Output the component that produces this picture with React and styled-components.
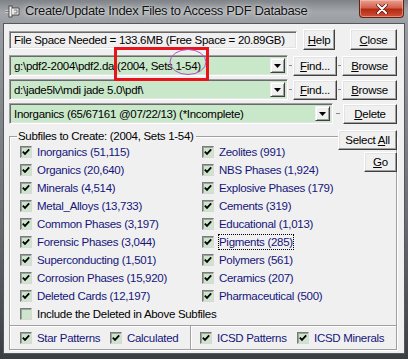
import React from "react";
import styled, { createGlobalStyle } from "styled-components";

const leftItems = [
  "Inorganics (51,115)",
  "Organics (20,640)",
  "Minerals (4,514)",
  "Metal_Alloys (13,733)",
  "Common Phases (3,197)",
  "Forensic Phases (3,044)",
  "Superconducting (1,501)",
  "Corrosion Phases (15,920)",
  "Deleted Cards (12,197)",
];

const rightItems = [
  "Zeolites (991)",
  "NBS Phases (1,924)",
  "Explosive Phases (179)",
  "Cements (319)",
  "Educational (1,013)",
  "Pigments (285)",
  "Polymers (561)",
  "Ceramics (207)",
  "Pharmaceutical (500)",
];

const GlobalStyle = createGlobalStyle`
  html, body {
    margin: 0;
    padding: 0;
    width: 408px;
    height: 359px;
    overflow: hidden;
    background: #3c3f42;
  }
  body {
    font-family: "Liberation Sans", Arial, sans-serif;
    font-size: 11.5px;
    letter-spacing: -0.3px;
  }
`;

const Check = ({ checked }) => (
  <Box>
    {checked && (
      <svg width="8" height="8" viewBox="0 0 8 8">
        <path d="M0.8 3.6 L3 5.9 L7.2 1.4" fill="none" stroke="#000" strokeWidth="1.8" />
      </svg>
    )}
  </Box>
);

const CheckItem = ({ label, checked = true, dark, focus, width }) => (
  <Item $w={width}>
    <Check checked={checked} />
    <ItemText $dark={dark} $focus={focus}>
      {label}
    </ItemText>
  </Item>
);

const Combo = ({ width, children }) => (
  <ComboBox $w={width}>
    <ComboText>{children}</ComboText>
    <DropBtn>
      <svg width="7" height="4" viewBox="0 0 7 4">
        <path d="M0 0 H7 L3.5 4 Z" fill="#000" />
      </svg>
    </DropBtn>
  </ComboBox>
);

const App = () => {
  return (
    <>
      <GlobalStyle />
      <Window>
        <TitleBar>
          <AppIcon width="16" height="13" viewBox="0 0 16 13">
            <path d="M0 6.5 H4" stroke="#f4f4f4" strokeWidth="2" />
            <path d="M0 6.5 H4" stroke="#333" strokeWidth="0.6" />
            <rect x="4" y="1" width="3" height="11" fill="#f4f4f4" stroke="#333" strokeWidth="0.8" />
            <path d="M7 3 H14 V10 H7" fill="#e8e8e8" stroke="#333" strokeWidth="0.8" />
            <path d="M9 5 H12 V8 H9" fill="none" stroke="#555" strokeWidth="0.7" />
          </AppIcon>
          <Title>Create/Update Index Files to Access PDF Database</Title>
          <CloseBox>
            <svg width="12" height="10" viewBox="0 0 12 10">
              <path d="M2 1 L10 9 M10 1 L2 9" stroke="#5a1010" strokeWidth="3.4" strokeLinecap="round" />
              <path d="M2 1 L10 9 M10 1 L2 9" stroke="#fff" strokeWidth="2" strokeLinecap="round" />
            </svg>
          </CloseBox>
        </TitleBar>

        <Body>
          <Row $h={21}>
            <Field $w={288}>File Space Needed = 133.6MB (Free Space = 20.89GB)</Field>
            <Button $w={32} $h={21} $ml={6}>
              <u>H</u>elp
            </Button>
            <Button $w={47} $h={21} $ml={15}>
              <u>C</u>lose
            </Button>
          </Row>

          <Row $h={21} $mt={5}>
            <Combo width={279}>g:\pdf2-2004\pdf2.da (2004, Sets 1-54)</Combo>
            <Dash />
            <Button $w={44}>
              <u>F</u>ind...
            </Button>
            <Dash />
            <Button $w={55}>
              <u>B</u>rowse
            </Button>
          </Row>

          <Row $h={21} $mt={3}>
            <Combo width={279}>d:\jade5lv\mdi jade 5.0\pdf\</Combo>
            <Dash />
            <Button $w={44}>
              <u>F</u>ind...
            </Button>
            <Dash />
            <Button $w={55}>
              <u>B</u>rowse
            </Button>
          </Row>

          <Row $h={21} $mt={3}>
            <Combo width={324}>Inorganics (65/67161 @07/22/13) (*Incomplete)</Combo>
            <Dash $wide />
            <Button $w={54}>
              <u>D</u>elete
            </Button>
          </Row>

          <GroupBox>
            <Legend>Subfiles to Create: (2004, Sets 1-54)</Legend>
            <SideButtons>
              <Button $w={59}>
                Select <u>A</u>ll
              </Button>
              <Button $w={33} $mt={2}>
                <u>G</u>o
              </Button>
            </SideButtons>

            <Subfiles>
              <Columns>
                <Column>
                  {leftItems.map((label) => (
                    <CheckItem key={label} label={label} />
                  ))}
                </Column>
                <Column>
                  {rightItems.map((label) => (
                    <CheckItem key={label} label={label} focus={label.startsWith("Pigments")} />
                  ))}
                </Column>
              </Columns>
              <CheckItem label="Include the Deleted in Above Subfiles" checked={false} dark />
            </Subfiles>

            <Extras>
              <Half>
                <CheckItem label="Star Patterns" width={90} />
                <CheckItem label="Calculated" />
              </Half>
              <Half $divider>
                <CheckItem label="ICSD Patterns" width={97} />
                <CheckItem label="ICSD Minerals" />
              </Half>
            </Extras>
          </GroupBox>

          <Markup width="100" height="40" viewBox="0 0 100 40">
            <rect x="2.5" y="1.5" width="92" height="31" fill="none" stroke="#e8141c" strokeWidth="3" />
            <ellipse cx="75" cy="15" rx="18" ry="12.5" fill="none" stroke="#b54cc8" strokeWidth="1" />
          </Markup>
        </Body>
      </Window>
    </>
  );
};

const Window = styled.div`
  width: 408px;
  height: 359px;
  display: flex;
  flex-direction: column;
  background: linear-gradient(
    to bottom,
    #7f8387 0px,
    #a3a7ab 12px,
    #9a9ea2 23px,
    #6a6e72 60%,
    #3b3e41 100%
  );
`;

const TitleBar = styled.div`
  height: 23px;
  display: flex;
  align-items: flex-start;
  flex-shrink: 0;
`;

const AppIcon = styled.svg`
  margin: 5px 0 0 5px;
  flex-shrink: 0;
`;

const Title = styled.div`
  margin-left: 4px;
  line-height: 21px;
  font-size: 13px;
  letter-spacing: -0.35px;
  color: #111;
  white-space: nowrap;
  text-shadow: 0 0 6px rgba(255, 255, 255, 0.85), 0 0 2px rgba(255, 255, 255, 0.6);
`;

const CloseBox = styled.div`
  margin-left: auto;
  margin-right: 4px;
  width: 43px;
  height: 17px;
  display: flex;
  align-items: center;
  justify-content: center;
  border: 1px solid #5e2418;
  border-top: none;
  border-radius: 0 0 4px 4px;
  background: linear-gradient(to bottom, #e8a293 0%, #d4614c 45%, #b42a12 55%, #d0503a 100%);
  box-shadow: inset 0 0 0 1px rgba(255, 200, 190, 0.5);
`;

const Body = styled.div`
  position: relative;
  margin: 0 3px;
  height: 331px;
  box-sizing: border-box;
  background: #f0f0f0;
  border: 1px solid #54585c;
  padding: 5px 7px 0 5px;
  display: flex;
  flex-direction: column;
`;

const Row = styled.div`
  height: ${(p) => p.$h}px;
  margin-top: ${(p) => p.$mt || 0}px;
  display: flex;
  align-items: center;
  flex-shrink: 0;
`;

const sunken = `
  border: 1px solid;
  border-color: #a0a0a0 #ffffff #ffffff #a0a0a0;
  box-shadow: inset 1px 1px 0 #696969, inset -1px -1px 0 #e3e3e3;
`;

const Field = styled.div`
  width: ${(p) => p.$w}px;
  height: 18px;
  box-sizing: border-box;
  ${sunken}
  padding: 0 4px;
  line-height: 16px;
  color: #000;
  white-space: nowrap;
  overflow: hidden;
`;

const ComboBox = styled.div`
  width: ${(p) => p.$w}px;
  height: 21px;
  box-sizing: border-box;
  ${sunken}
  background: #c9e7c9;
  display: flex;
  align-items: center;
  padding: 0 2px 0 4px;
`;

const ComboText = styled.span`
  flex: 1;
  color: #000;
  white-space: nowrap;
  overflow: hidden;
`;

const DropBtn = styled.span`
  width: 15px;
  height: 15px;
  box-sizing: border-box;
  display: flex;
  align-items: center;
  justify-content: center;
  background: #f0f0f0;
  border: 1px solid;
  border-color: #f0f0f0 #404040 #404040 #f0f0f0;
  box-shadow: inset 1px 1px 0 #fff, inset -1px -1px 0 #a0a0a0;
`;

const Dash = styled.span`
  width: ${(p) => (p.$wide ? 4 : 3)}px;
  height: 1px;
  margin: 0 ${(p) => (p.$wide ? 3 : 1)}px;
  background: #8a8a8a;
  flex-shrink: 0;
`;

const Button = styled.button`
  width: ${(p) => p.$w}px;
  height: ${(p) => p.$h || 20}px;
  margin: ${(p) => p.$mt || 0}px 0 0 ${(p) => p.$ml || 0}px;
  padding: 0;
  box-sizing: border-box;
  flex-shrink: 0;
  font: inherit;
  letter-spacing: inherit;
  color: #000;
  background: #f0f0f0;
  border: 1px solid;
  border-color: #ffffff #404040 #404040 #ffffff;
  box-shadow: inset -1px -1px 0 #a0a0a0, inset 1px 1px 0 #e3e3e3;
  line-height: 16px;
  white-space: nowrap;
`;

const GroupBox = styled.div`
  position: relative;
  margin-top: 12px;
  height: 214px;
  box-sizing: border-box;
  border: 1px solid #a0a0a0;
  box-shadow: inset 1px 1px 0 #fff, 1px 1px 0 #fff;
  display: flex;
  flex-direction: column;
`;

const Legend = styled.span`
  position: absolute;
  top: -8px;
  left: 7px;
  padding: 0 2px 0 1px;
  line-height: 14px;
  background: #f0f0f0;
  color: #000;
`;

const SideButtons = styled.div`
  position: absolute;
  top: -7px;
  right: -1px;
  display: flex;
  flex-direction: column;
  align-items: flex-end;
`;

const Subfiles = styled.div`
  padding: 6px 0 0 10px;
  height: 188px;
  box-sizing: border-box;
  display: flex;
  flex-direction: column;
`;

const Columns = styled.div`
  display: grid;
  grid-template-columns: 182px 1fr;
`;

const Column = styled.div`
  display: flex;
  flex-direction: column;
`;

const Item = styled.label`
  display: flex;
  align-items: center;
  height: 18px;
  width: ${(p) => (p.$w ? `${p.$w}px` : "auto")};
  flex-shrink: 0;
`;

const Box = styled.span`
  width: 12px;
  height: 12px;
  box-sizing: border-box;
  flex-shrink: 0;
  display: flex;
  align-items: center;
  justify-content: center;
  background: #cde5cd;
  border: 1px solid;
  border-color: #7a7a7a #d8d8d8 #d8d8d8 #7a7a7a;
  box-shadow: inset 1px 1px 0 #9aa59a;
`;

const ItemText = styled.span`
  margin-left: 5px;
  color: ${(p) => (p.$dark ? "#000" : "#15157a")};
  white-space: nowrap;
  line-height: 14px;
  outline: ${(p) => (p.$focus ? "1px dotted #000" : "none")};
  outline-offset: 0;
`;

const Extras = styled.div`
  flex: 1;
  display: grid;
  grid-template-columns: 180px 1fr;
  border-top: 1px solid #a0a0a0;
  box-shadow: inset 0 1px 0 #fff;
`;

const Half = styled.div`
  display: flex;
  align-items: center;
  padding-left: ${(p) => (p.$divider ? 9 : 10)}px;
  border-left: ${(p) => (p.$divider ? "1px solid #a0a0a0" : "none")};
  box-shadow: ${(p) => (p.$divider ? "inset 1px 0 0 #fff" : "none")};
`;

const Markup = styled.svg`
  position: absolute;
  left: 109px;
  top: 23px;
  pointer-events: none;
`;

export default App;
